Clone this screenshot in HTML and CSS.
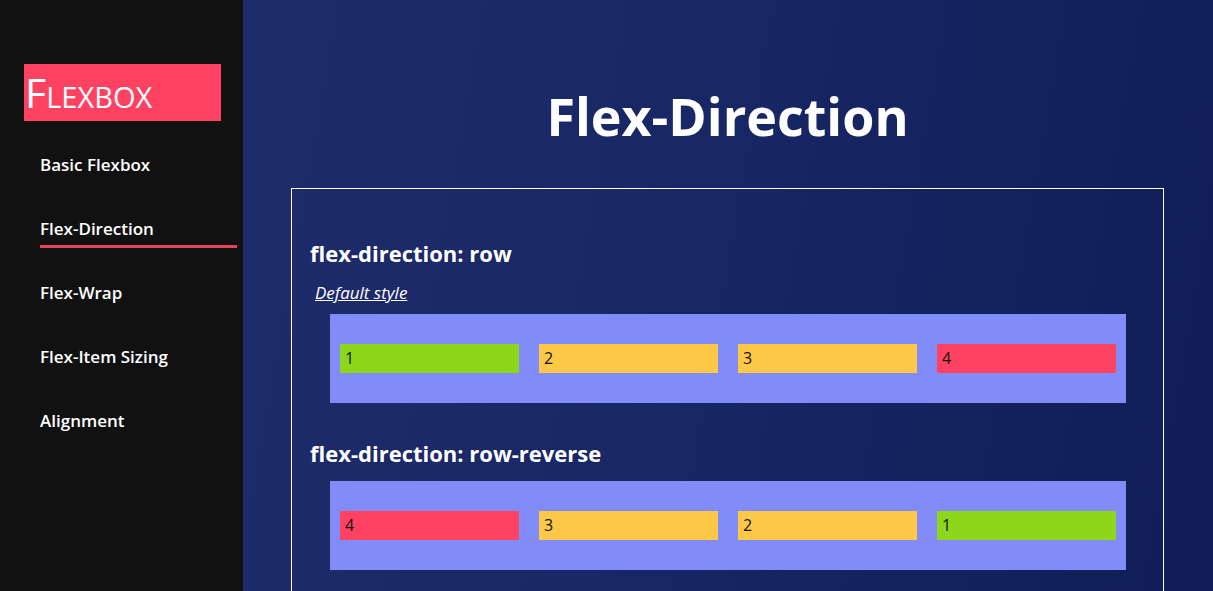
FILE: index.html
```html
<!DOCTYPE html>
<html>
<head>
<meta charset="utf-8">
<link rel="stylesheet" href="styles.css">
</head>
<body>
<div class="page">
  <aside class="sidebar">
    <div class="logo">Flexbox</div>
    <nav class="nav">
      <a class="nav-item">Basic Flexbox</a>
      <a class="nav-item active">Flex-Direction</a>
      <a class="nav-item">Flex-Wrap</a>
      <a class="nav-item">Flex-Item Sizing</a>
      <a class="nav-item">Alignment</a>
    </nav>
  </aside>
  <main class="main">
    <h1 class="title">Flex-Direction</h1>
    <section class="box">
      <h2 class="section-title">flex-direction: row</h2>
      <p class="note">Default style</p>
      <div class="demo">
        <div class="item green">1</div>
        <div class="item yellow">2</div>
        <div class="item yellow">3</div>
        <div class="item red">4</div>
      </div>
      <h2 class="section-title second">flex-direction: row-reverse</h2>
      <div class="demo reverse">
        <div class="item green">1</div>
        <div class="item yellow">2</div>
        <div class="item yellow">3</div>
        <div class="item red">4</div>
      </div>
    </section>
  </main>
</div>
</body>
</html>
```

FILE: styles.css
```css
* { box-sizing: border-box; }
html, body { margin: 0; padding: 0; height: 100%; overflow: hidden; }
body { font-family: "Open Sans", "Noto Sans", sans-serif; background: #111; }
.page { display: flex; height: 591px; }
.sidebar {
  width: 243px;
  flex: none;
  background: #111111;
  padding-top: 64px;
}
.logo {
  margin-left: 24px;
  width: 197px;
  height: 57px;
  background: #ff4162;
  color: #fff;
  font-variant: small-caps;
  font-size: 41px;
  line-height: 57px;
  padding-left: 1px;
  overflow: hidden;
}
.nav { display: flex; flex-direction: column; padding-top: 33px; padding-left: 40px; }
.nav-item {
  color: #fff;
  font-weight: 600;
  font-size: 17px;
  height: 64px;
  line-height: 22px;
  cursor: pointer;
}
.nav-item.active { position: relative; }
.nav-item.active::after {
  content: "";
  position: absolute;
  left: 0;
  top: 27px;
  width: 197px;
  height: 3px;
  background: #e8435e;
}
.main {
  flex: 1;
  background: linear-gradient(100deg, #1f2c6b 0%, #172664 50%, #101d56 100%);
  padding: 0 49px 0 48px;
  overflow: hidden;
}
.title {
  margin: 81px 0 0;
  text-align: center;
  color: #fff;
  font-weight: 700;
  font-size: 52px;
  line-height: 70px;
}
.box {
  margin-top: 37px;
  border: 1px solid #fff;
  padding: 50px 0 0 18px;
  height: 500px;
}
.section-title {
  margin: 0;
  color: #fff;
  font-weight: 700;
  font-size: 22px;
  line-height: 28px;
}
.section-title.second { margin-top: 36px; }
.note {
  margin: 15px 0 0 5px;
  color: #fff;
  font-style: italic;
  text-decoration: underline;
  font-size: 17px;
  line-height: 22px;
}
.demo {
  display: flex;
  margin: 10px 37px 0 20px;
  padding: 20px 0;
  background: #828cf8;
}
.section-title + .demo { margin-top: 14px; }
.demo.reverse { flex-direction: row-reverse; }
.item {
  flex: 1;
  margin: 10px;
  height: 29px;
  padding: 3px 5px;
  font-size: 16px;
  line-height: 22px;
  color: #111;
}
.green { background: #8ed61a; }
.yellow { background: #fcc846; }
.red { background: #ff4162; }
```
